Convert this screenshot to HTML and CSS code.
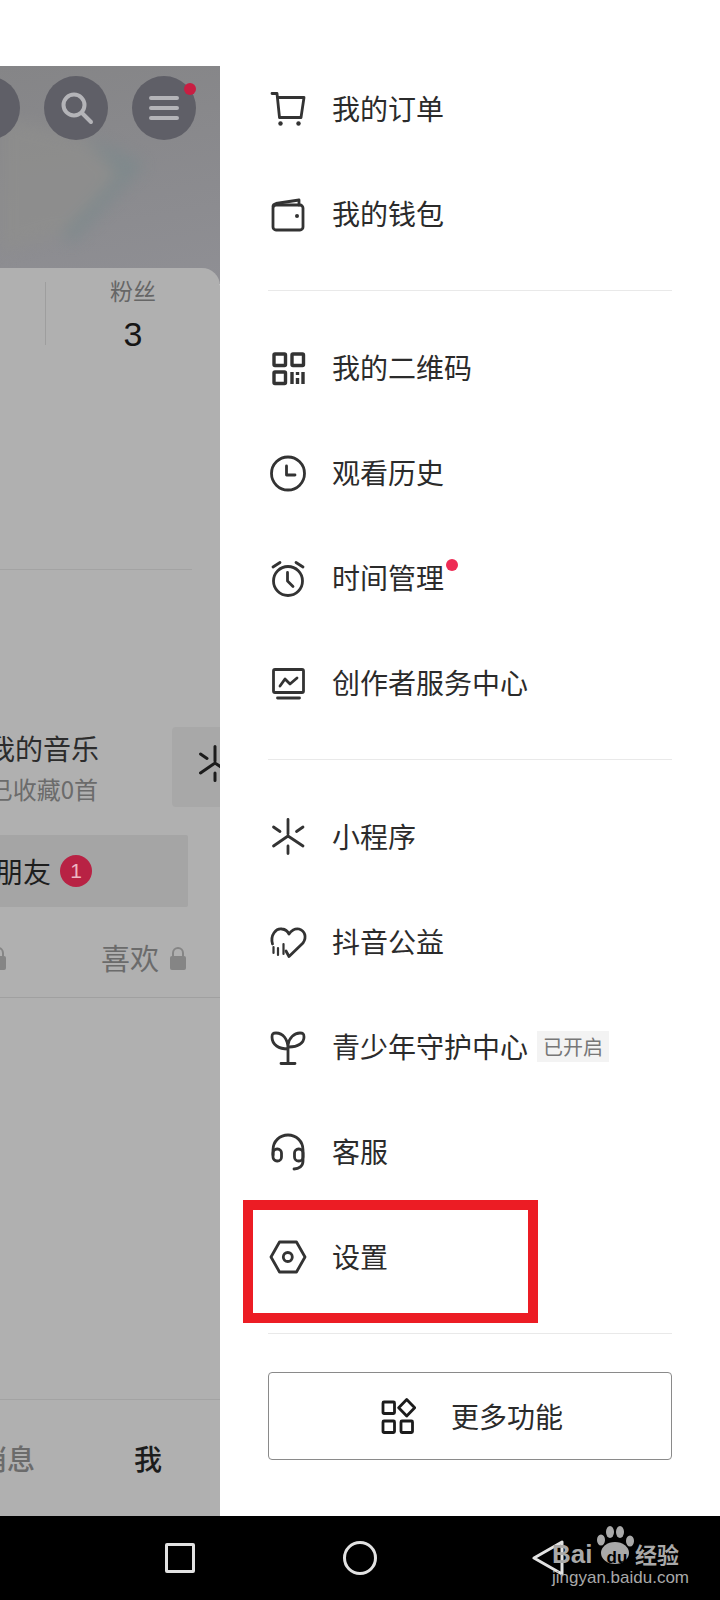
FILE: index.html
```html
<!DOCTYPE html>
<html lang="zh-CN">
<head>
    <meta charset="UTF-8">
    <meta name="viewport" content="width=device-width, initial-scale=1.0">
    <title>抖音 侧边菜单</title>
    <link rel="stylesheet" href="styles.css">
</head>
<body>
    <div class="screen">
        <div class="main">
            <!-- dimmed profile page behind the drawer -->
            <div class="profile">
                <div class="cover">
                    <svg class="cover-art" viewBox="0 0 220 202">
                        <polygon points="0,50 85,72 118,108 62,168 0,186" fill="#8f8f8d"/>
                        <polygon points="85,70 145,98 72,178 62,168 118,108" fill="#7a898c"/>
                    </svg>
                    <div class="round-btn round-btn-blank"></div>
                    <div class="round-btn">
                        <svg class="cover-icon" viewBox="0 0 36 36">
                            <circle cx="16" cy="15" r="10.5"/>
                            <path d="M24 23l9 9"/>
                        </svg>
                    </div>
                    <div class="round-btn round-btn-last">
                        <svg class="cover-icon" viewBox="0 0 36 36">
                            <path d="M5 8h26M5 18h26M5 28h26"/>
                        </svg>
                        <span class="round-dot"></span>
                    </div>
                </div>
                <div class="card">
                    <div class="stats">
                        <div class="stat">
                            <div class="stat-label">粉丝</div>
                            <div class="stat-num">3</div>
                        </div>
                    </div>
                    <div class="card-line"></div>
                    <div class="music">
                        <div class="music-text">
                            <div class="music-title">我的音乐</div>
                            <div class="music-sub">已收藏0首</div>
                        </div>
                        <div class="music-box">
                            <svg class="music-icon" viewBox="0 0 40 40">
                                <path d="M20 1.500v14.500M5.500 28L20 18l15 10M5.500 9l6.500 4.500M35 9l-6.500 4.500M20 28v7.500"/>
                            </svg>
                        </div>
                    </div>
                    <div class="friends">
                        <span class="friends-text">朋友</span>
                        <span class="friends-badge">1</span>
                    </div>
                    <div class="tabs">
                        <svg class="lock" viewBox="0 0 16 24"><path d="M3 10V7a5 5 0 0 1 10 0v3"/><rect x="0" y="10" width="16" height="14" rx="2"/></svg>
                        <span class="tab-like">喜欢</span>
                        <svg class="lock" viewBox="0 0 16 24"><path d="M3 10V7a5 5 0 0 1 10 0v3"/><rect x="0" y="10" width="16" height="14" rx="2"/></svg>
                    </div>
                    <div class="bottom-tabs">
                        <span class="bottom-tab">消息</span>
                        <span class="bottom-tab bottom-tab-on">我</span>
                    </div>
                </div>
            </div>

            <!-- drawer -->
            <div class="drawer">
                <div class="group group-first">
                    <div class="row">
                        <svg class="icon" viewBox="0 0 40 40">
                            <path d="M4 3.500h5L11.500 27.500H33L36 7.500H9.500"/>
                            <circle class="solid" cx="12.500" cy="33.500" r="2.200"/>
                            <circle class="solid" cx="30.500" cy="33.500" r="2.200"/>
                        </svg>
                        <span class="row-text">我的订单</span>
                    </div>
                    <div class="row">
                        <svg class="icon" viewBox="0 0 40 40">
                            <rect x="5" y="10" width="30" height="25" rx="3"/>
                            <path d="M5 11.500C5 9.500 6 9 8 8.500L31 5V10"/>
                            <circle class="solid" cx="29" cy="21" r="2"/>
                        </svg>
                        <span class="row-text">我的钱包</span>
                    </div>
                </div>
                <div class="group">
                    <div class="row">
                        <svg class="icon icon-qr" viewBox="0 0 40 40">
                            <rect x="6" y="5" width="11.500" height="11.500" rx="1"/>
                            <rect x="24" y="5" width="11.500" height="11.500" rx="1"/>
                            <rect x="6" y="23" width="11.500" height="11.500" rx="1"/>
                            <path class="square" d="M24 23v12M29.500 23v3M29.500 29v6M35 23v12"/>
                        </svg>
                        <span class="row-text">我的二维码</span>
                    </div>
                    <div class="row">
                        <svg class="icon" viewBox="0 0 40 40">
                            <circle cx="20" cy="19.500" r="16.500"/>
                            <path d="M18.500 12v9H27"/>
                        </svg>
                        <span class="row-text">观看历史</span>
                    </div>
                    <div class="row">
                        <svg class="icon" viewBox="0 0 40 40">
                            <circle cx="20" cy="22" r="14.500"/>
                            <path d="M19.500 13.500V22l5.500 5.500M5 8l7-4.500M35 8l-7-4.500"/>
                        </svg>
                        <span class="row-text row-label">时间管理<i class="row-dot"></i></span>
                    </div>
                    <div class="row">
                        <svg class="icon" viewBox="0 0 40 40">
                            <rect x="5.500" y="5.500" width="30" height="23" rx="1.500"/>
                            <path d="M9.500 34h22M12 22l5-7 5 5 7-6"/>
                        </svg>
                        <span class="row-text">创作者服务中心</span>
                    </div>
                </div>
                <div class="group">
                    <div class="row">
                        <svg class="icon" viewBox="0 0 40 40">
                            <path d="M20 1.500v14.500M5.500 28L20 18l15 10M5.500 9l6.500 4.500M35 9l-6.500 4.500M20 28v7.500"/>
                        </svg>
                        <span class="row-text">小程序</span>
                    </div>
                    <div class="row">
                        <svg class="icon" viewBox="0 0 40 40">
                            <path d="M4.500 21C2 12 8 5 14 6c4 .5 6 3 7 5 2-3 6-6 10-5 6 2 8 8 4 14L21 33.500 18 28"/>
                            <path class="thin" d="M5.500 24v6M10 25v7M15.500 21v10"/>
                        </svg>
                        <span class="row-text">抖音公益</span>
                    </div>
                    <div class="row">
                        <svg class="icon" viewBox="0 0 40 40">
                            <path d="M20 21C11 21 4 17 4 9 4 6 5 5 8 5 15 5 20 11 20 21zM20 17C21 10 26 5 32 5 35 5 36 6 36 9 36 15 30 19 21 19M20 18v17M13 35.500h14"/>
                        </svg>
                        <span class="row-text">青少年守护中心</span>
                        <span class="tag">已开启</span>
                    </div>
                    <div class="row">
                        <svg class="icon" viewBox="0 0 40 40">
                            <path d="M5 22v-5C5 8 12 2 20 2s15 6 15 15v11c0 5-4 8-9 8"/>
                            <rect x="5" y="16" width="8.500" height="12" rx="4"/>
                            <rect x="26.500" y="16" width="8.500" height="12" rx="4"/>
                        </svg>
                        <span class="row-text">客服</span>
                    </div>
                    <div class="row row-marked">
                        <svg class="icon" viewBox="0 0 40 40">
                            <path d="M3 19l8.500-15h17L37 19l-8.500 15h-17z"/>
                            <circle cx="19.800" cy="19" r="4.500"/>
                        </svg>
                        <span class="row-text">设置</span>
                        <div class="marker"></div>
                    </div>
                </div>
                <div class="more">
                    <svg class="more-icon" viewBox="0 0 36 36">
                        <rect x="3" y="4" width="11.500" height="11.500" rx="1"/>
                        <rect x="3" y="23" width="11.500" height="11.500" rx="1"/>
                        <rect x="21" y="23" width="11.500" height="11.500" rx="1"/>
                        <path d="M26.700 1.500l8 8.200-8 8.200-8-8.200z"/>
                    </svg>
                    <span>更多功能</span>
                </div>
            </div>
        </div>

        <div class="nav">
            <div class="nav-square"></div>
            <div class="nav-circle"></div>
            <svg class="nav-back" viewBox="0 0 32 36">
                <path d="M30 2v32L2 18z"/>
            </svg>
            <div class="mark">
                <svg class="mark-paw" viewBox="0 0 42 42">
                    <ellipse cx="6" cy="16" rx="4" ry="5.500"/>
                    <ellipse cx="15" cy="8" rx="4" ry="6"/>
                    <ellipse cx="25" cy="8" rx="4" ry="6"/>
                    <ellipse cx="35" cy="17" rx="4" ry="5.500"/>
                    <ellipse cx="20" cy="29" rx="14" ry="11"/>
                </svg>
                <div class="mark-top"><span class="mark-bai">Bai</span><span class="mark-du">du</span><span class="mark-cn">经验</span></div>
                <div class="mark-url">jingyan.baidu.com</div>
            </div>
        </div>
    </div>
</body>
</html>
```

FILE: styles.css
```css
* {
    box-sizing: border-box;
}
body {
    margin: 0;
    background-color: #fff;
    font-family: "Noto Sans CJK SC", "Liberation Sans", sans-serif;
    color: #2b2b2b;
}
.screen {
    width: 720px;
    height: 1600px;
    overflow: hidden;
    display: flex;
    flex-direction: column;
}
.main {
    height: 1516px;
    display: flex;
}

/* profile page */
.profile {
    width: 220px;
    padding-top: 66px;
    display: flex;
    flex-direction: column;
    overflow: hidden;
}
.cover {
    position: relative;
    height: 218px;
    margin-bottom: -16px;
    flex-shrink: 0;
    padding: 10px 24px 0 0;
    display: flex;
    justify-content: flex-end;
    gap: 24px;
    background: linear-gradient(170deg, #858587, #8f8f94);
    overflow: hidden;
}
.cover-art {
    position: absolute;
    left: 0;
    top: 0;
    width: 220px;
    height: 202px;
    filter: blur(8px);
    opacity: .7;
}
.round-btn {
    position: relative;
    width: 64px;
    height: 64px;
    flex-shrink: 0;
    border-radius: 50%;
    background-color: #5f5f67;
    display: flex;
    align-items: center;
    justify-content: center;
}
.cover-icon {
    width: 36px;
    height: 36px;
    fill: none;
    stroke: #b4b4b8;
    stroke-width: 4;
    stroke-linecap: round;
}
.round-dot {
    position: absolute;
    top: 7px;
    right: 0;
    width: 12px;
    height: 12px;
    border-radius: 50%;
    background-color: #c81e42;
}
.card {
    position: relative;
    flex: 1;
    display: flex;
    flex-direction: column;
    background-color: #b0b0b0;
    border-top-right-radius: 18px;
    overflow: hidden;
}
.stats {
    height: 301px;
    padding: 14px 0 0 45px;
}
.stat {
    height: 63px;
    display: flex;
    flex-direction: column;
    border-left: 1px solid #9e9e9e;
    text-align: center;
}
.stat-label {
    font-size: 23px;
    line-height: 23px;
    margin-top: -3px;
    color: #666;
}
.stat-num {
    margin-top: 13px;
    font-family: "Liberation Sans", sans-serif;
    font-size: 34px;
    line-height: 38px;
    color: #161616;
}
.card-line {
    height: 1px;
    margin-right: 28px;
    background-color: #a3a3a3;
}
.music {
    margin-top: 157px;
    height: 80px;
    display: flex;
    justify-content: flex-end;
    gap: 73px;
}
.music-text {
    flex-shrink: 0;
    white-space: nowrap;
    text-align: right;
}
.music-title {
    font-size: 28px;
    line-height: 40px;
    margin-top: 1px;
    color: #2c2c2c;
}
.music-sub {
    margin-top: 5px;
    margin-right: 1px;
    font-size: 24px;
    line-height: 32px;
    color: #6b6b6b;
}
.music-box {
    width: 48px;
    flex-shrink: 0;
    border-radius: 4px 0 0 4px;
    background-color: #a8a8a8;
    overflow: hidden;
    padding: 18px 0 0 23px;
}
.music-icon {
    display: block;
    width: 40px;
    height: 40px;
    fill: none;
    stroke: #1c1c1c;
    stroke-width: 3;
    stroke-linecap: round;
}
.friends {
    margin-top: 28px;
    width: 188px;
    height: 72px;
    padding-right: 96px;
    display: flex;
    justify-content: flex-end;
    align-items: center;
    gap: 9px;
    background-color: #a5a5a5;
    border-radius: 0 2px 2px 0;
}
.friends-text {
    flex-shrink: 0;
    font-size: 28px;
    color: #1e1e1e;
}
.friends-badge {
    width: 32px;
    height: 32px;
    flex-shrink: 0;
    border-radius: 50%;
    background-color: #b82244;
    color: #eeb6c2;
    font-family: "Liberation Sans", sans-serif;
    font-size: 21px;
    line-height: 32px;
    text-align: center;
}
.tabs {
    height: 91px;
    padding: 10px 34px 0 0;
    display: flex;
    justify-content: flex-end;
    align-items: center;
    border-bottom: 1px solid #a0a0a0;
}
.tab-like {
    flex-shrink: 0;
    margin: 0 11px 0 95px;
    font-size: 29px;
    color: #6b6b6b;
}
.lock {
    flex-shrink: 0;
    width: 16px;
    height: 24px;
    margin-top: 2px;
    fill: #858585;
}
.lock path {
    fill: none;
    stroke: #858585;
    stroke-width: 2;
}
.bottom-tabs {
    margin-top: auto;
    height: 117px;
    padding: 0 58px 0 0;
    display: flex;
    justify-content: flex-end;
    align-items: center;
    gap: 99px;
    border-top: 1px solid #a3a3a3;
}
.bottom-tab {
    flex-shrink: 0;
    font-size: 28px;
    font-weight: 500;
    color: #6b6b6b;
}
.bottom-tab-on {
    color: #1c1c1c;
}

/* drawer */
.drawer {
    flex: 1;
    padding: 0 48px;
    background-color: #fff;
}
.group {
    padding: 25px 0 23px;
    border-bottom: 1px solid #e9e9e9;
}
.group-first {
    padding-top: 57px;
}
.row {
    position: relative;
    height: 105px;
    display: flex;
    align-items: center;
    font-size: 28px;
}
.row-text {
    padding-bottom: 3px;
}
.icon {
    width: 40px;
    height: 40px;
    margin-right: 24px;
    flex-shrink: 0;
    fill: none;
    stroke: #333;
    stroke-width: 2.800;
    stroke-linecap: round;
    stroke-linejoin: round;
}
.icon .solid {
    fill: #333;
    stroke: none;
}
.icon .square {
    stroke-linecap: butt;
}
.icon .thin {
    stroke-width: 2.200;
}
.icon-qr {
    stroke-width: 3.400;
}
.row-label {
    position: relative;
}
.row-dot {
    position: absolute;
    top: 2px;
    right: -14px;
    width: 12px;
    height: 12px;
    border-radius: 50%;
    background-color: #ee2c55;
}
.tag {
    margin: 0 0 2px 9px;
    width: 72px;
    height: 31px;
    background-color: #f3f3f3;
    color: #777;
    font-size: 20px;
    line-height: 31px;
    text-align: center;
}
.marker {
    position: absolute;
    left: -25px;
    top: -5px;
    width: 295px;
    height: 123px;
    border: 10px solid #ec1c24;
}
.more {
    margin-top: 38px;
    height: 88px;
    padding-left: 3px;
    display: flex;
    justify-content: center;
    align-items: center;
    gap: 35px;
    border: 1px solid #8a8a8a;
    border-radius: 4px;
    font-size: 28px;
}
.more-icon {
    width: 36px;
    height: 36px;
    fill: none;
    stroke: #1c1c1c;
    stroke-width: 2.800;
    stroke-linejoin: round;
}

/* system nav bar */
.nav {
    position: relative;
    flex: 1;
    padding-left: 165px;
    display: flex;
    align-items: center;
    background-color: #000;
}
.nav-square {
    width: 30px;
    height: 30px;
    margin-right: 148px;
    border: 3px solid #e2e2e2;
    border-radius: 2px;
}
.nav-circle {
    width: 34px;
    height: 34px;
    margin-right: 155px;
    border: 3px solid #e2e2e2;
    border-radius: 50%;
}
.nav-back {
    width: 32px;
    height: 36px;
    fill: none;
    stroke: #e2e2e2;
    stroke-width: 3;
    stroke-linejoin: round;
}
.mark {
    position: absolute;
    left: 552px;
    top: 4px;
    width: 140px;
    height: 70px;
    color: #a9a9a9;
    font-family: "Liberation Sans", sans-serif;
}
.mark-paw {
    position: absolute;
    left: 43px;
    top: 4px;
    width: 42px;
    height: 42px;
    fill: #a9a9a9;
}
.mark-top {
    position: relative;
    display: flex;
    align-items: baseline;
    padding-top: 20px;
    height: 48px;
}
.mark-bai {
    width: 47px;
    font-size: 26px;
    font-weight: 700;
    line-height: 26px;
}
.mark-du {
    width: 36px;
    color: #000;
    font-size: 17px;
    font-weight: 700;
    line-height: 26px;
    text-align: center;
}
.mark-cn {
    font-family: "Noto Sans CJK SC", sans-serif;
    font-size: 22px;
    font-weight: 700;
    line-height: 26px;
}
.mark-url {
    font-size: 17px;
    line-height: 20px;
}
```
